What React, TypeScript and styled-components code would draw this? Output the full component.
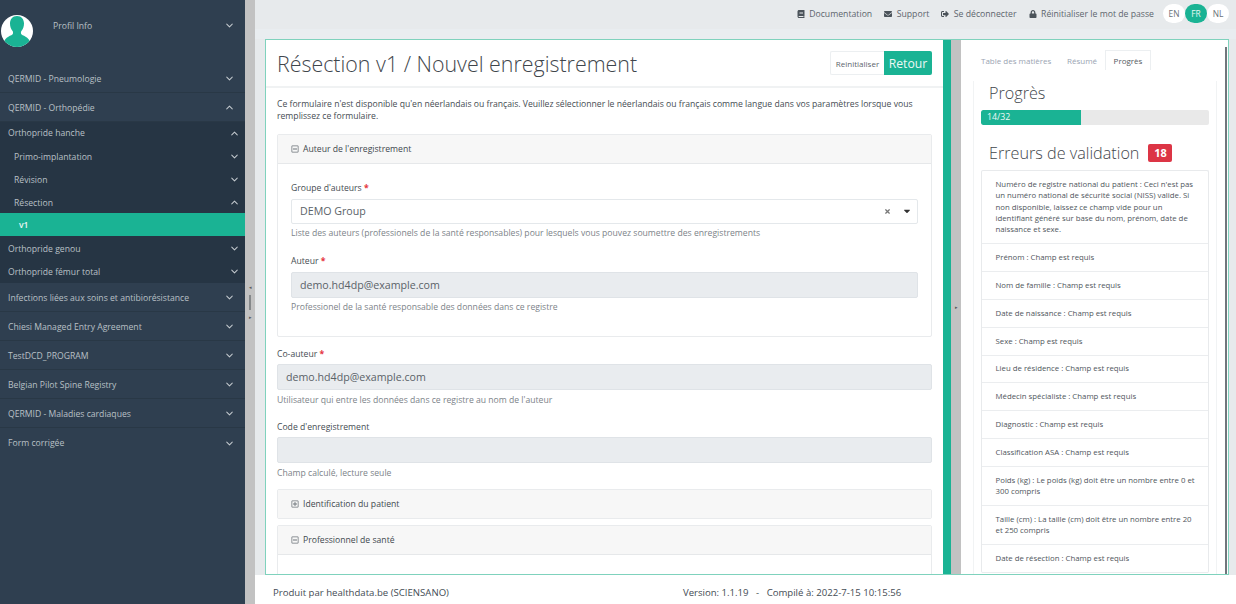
import React from "react";
import styled, { createGlobalStyle } from "styled-components";
import { FaBook, FaEnvelope, FaSignOutAlt, FaLock, FaRegMinusSquare, FaRegPlusSquare, FaTimes, FaCaretDown } from "react-icons/fa";
import { ChevronDown, ChevronUp } from "lucide-react";

const Global = createGlobalStyle`
  html, body { margin: 0; padding: 0; height: 100%; overflow: hidden; }
  body { font-family: "Open Sans", "Liberation Sans", sans-serif; color: #444c54; background: #fff; }
  * { box-sizing: border-box; }
`;

const Page = styled.div`display: flex; width: 1236px; height: 604px; overflow: hidden;`;
const Sidebar = styled.nav`width: 245px; flex: none; background: #2f3f50; color: #b9c0c6; font-size: 8.65px; display: flex; flex-direction: column;`;
const Profile = styled.div`height: 64px; display: flex; align-items: flex-start; padding: 15px 10px 0 1px;`;
const Avatar = styled.svg`width: 32px; height: 32px; flex: none;`;
const ProfileName = styled.span`margin-left: 20px; flex: 1; line-height: 22px;`;
const Row = styled.div<{ $last?: boolean }>`
  height: 29px; display: flex; align-items: center; justify-content: space-between; padding: 1px 10px 0 8px;
  border-bottom: ${p => p.$last ? "0" : "1px solid #293846"};
`;
const Sub = styled.div`background: #263544; height: 161px; display: flex; flex-direction: column;`;
const SubRow = styled.div<{ $level?: number; $active?: boolean; $first?: boolean }>`
  height: ${p => p.$first ? 22 : 23}px; flex: none; display: flex; align-items: center; justify-content: space-between;
  padding: ${p => p.$first || p.$active ? "0 5px 0" : "2px 5px 0"};
  padding-left: ${p => p.$level === 2 ? 19 : p.$level === 1 ? 14 : 8}px;
  ${p => p.$active ? "background: #1ab394; color: #eef6f4; font-weight: 600;" : ""}
`;
const Chev = styled.span<{ $mt?: number }>`display: inline-flex; color: #c4cacf; margin-top: ${p => p.$mt ?? 0}px; svg { display: block; }`;
const Splitter = styled.div`width: 10px; flex: none; background: #c2c2c2; display: flex; flex-direction: column; align-items: center; justify-content: center; gap: 5px;`;
const Tri = styled.span`font-size: 5px; line-height: 5px; color: #5a5a5a;`;
const Handle = styled.span`width: 2px; height: 15px; background: #85888a;`;
const Content = styled.main`flex: 1; min-width: 0; display: flex; flex-direction: column; background: #e7eaec;`;
const Top = styled.header`height: 29px; flex: none; display: flex; align-items: center; justify-content: flex-end; padding: 0 7px 2px 0; font-size: 8.7px; color: #5d656c;`;
const TopLink = styled.span`display: inline-flex; align-items: center; gap: 4.5px; margin-right: 12px; svg { width: 8px; height: 8px; color: #4b535a; }`;
const Langs = styled.div`display: flex; margin-left: -3px;`;
const Lang = styled.span<{ $on?: boolean }>`
  width: 22px; height: 19px; border-radius: 10px; display: flex; align-items: center; justify-content: center; font-size: 8.4px;
  background: ${p => p.$on ? "#1ab394" : "#fff"}; color: ${p => p.$on ? "#e8f7f3" : "#6b7278"};
`;
const Band = styled.div`height: 10px; flex: none; background: #e9edf0;`;
const PanelWrap = styled.div`flex: 1; display: flex; padding: 0 7px 0 10px; min-height: 0;`;
const Panel = styled.section`flex: 1; display: flex; min-width: 0; background: #fff; border: 1px solid #7fd2bd; overflow: hidden;`;
const FormCol = styled.div`width: 677px; flex: none; display: flex; flex-direction: column; overflow: hidden;`;
const Head = styled.div`height: 48px; flex: none; display: flex; align-items: center; justify-content: space-between; padding: 0 11px; border-bottom: 2px solid #f0f2f3;`;
const Title = styled.h1`margin: 2px 0 0; font-weight: 300; font-size: 21.4px; color: #3f464c; white-space: nowrap; line-height: 30px;`;
const Btns = styled.div`display: flex;`;
const ResetBtn = styled.button`height: 24px; width: 54px; border: 1px solid #eceff1; border-right: 0; background: #fff; border-radius: 2px 0 0 2px; font: 8px "Open Sans", sans-serif; color: #5d656c; padding: 0;`;
const BackBtn = styled.button`height: 24px; width: 48px; border: 0; background: #1ab394; border-radius: 0 2px 2px 0; font: 12.2px "Open Sans", sans-serif; color: #eef8f5; padding: 0;`;
const Body = styled.div`padding: 10px 11px 0; font-size: 8.65px; line-height: 12.4px; color: #454c52; flex: 1;`;
const Intro = styled.p`margin: 0 0 11px;`;
const Card = styled.div<{ $h?: number; $mb?: number }>`border: 1px solid #e9ebed; border-radius: 2px; margin-bottom: ${p => p.$mb ?? 6}px; ${p => p.$h ? `height: ${p.$h}px;` : ""}`;
const CardHead = styled.div<{ $line?: boolean }>`
  height: ${p => p.$line ? 29 : 28}px; background: #f7f7f7; display: flex; align-items: center; gap: 4px; padding: 0 13px; font-size: 8.65px; color: #41484e;
  ${p => p.$line ? "border-bottom: 1px solid #e6e8ea;" : ""}
  svg { width: 8px; height: 8px; color: #6c7379; }
`;
const CardBody = styled.div`padding: 18.5px 13px 0;`;
const Field = styled.div<{ $mb?: number }>`margin-bottom: ${p => p.$mb ?? 0}px;`;
const Label = styled.div`font-size: 8.65px; line-height: 12px; height: 12px; margin-bottom: 4.5px; color: #454c52;`;
const Star = styled.span`color: #e5343d; font-weight: 700;`;
const Input = styled.div<{ $ro?: boolean; $h?: number }>`
  height: ${p => p.$h ?? 26}px; border: 1px solid ${p => p.$ro ? "#dfe3e7" : "#e4e8eb"}; border-radius: 2px; background: ${p => p.$ro ? "#e9ecef" : "#fff"};
  display: flex; align-items: center; padding: 0 5px 0 8px; font-size: 10.65px; color: #5a6268; gap: 11px;
`;
const InputText = styled.span`flex: 1;`;
const Clear = styled.span`display: inline-flex; color: #777; svg { width: 7px; height: 7px; display: block; }`;
const Caret = styled.span`display: inline-flex; color: #333; svg { width: 10px; height: 10px; display: block; }`;
const Help = styled.div`font-size: 8.65px; line-height: 12px; margin-top: 3.5px; color: #7c8389;`;
const Green = styled.div`width: 8px; flex: none; background: #1ab394;`;
const Mid = styled.div`width: 10px; flex: none; background: #c2c2c2; display: flex; align-items: center; justify-content: center;`;
const Right = styled.aside`flex: 1; min-width: 0; position: relative; padding: 10px 0 0 12px; overflow: hidden;`;
const ScrollThumb = styled.span`position: absolute; right: 1px; top: 7px; width: 2px; bottom: 0; background: #70767c;`;
const Tabs = styled.div`display: flex; height: 20px; font-size: 8px; padding-left: 8px; align-items: center; color: #9aa4b2;`;
const Tab = styled.span<{ $on?: boolean; $w: number }>`
  width: ${p => p.$w}px; flex: none; height: 20px; display: flex; align-items: center; justify-content: ${p => p.$on ? "center" : "flex-start"};
  ${p => p.$on ? "border: 1px solid #eceff1; border-bottom: 0; color: #545b61; background: #fff;" : ""}
`;
const TabBody = styled.div`width: 244px; border: 1px solid #f1f3f4; border-width: 0 1px; padding: 0 7px; height: 500px;`;
const H2 = styled.h2<{ $mt: number }>`margin: ${p => p.$mt}px 0 0 8px; font-weight: 300; font-size: 16.2px; line-height: 24px; color: #3f464c; display: flex; align-items: center; white-space: nowrap;`;
const Progress = styled.div`height: 15px; background: #e9e9e9; border-radius: 2px; overflow: hidden; margin-top: 5px;`;
const Bar = styled.div`height: 100%; background: #1ab394; color: #eef8f5; font-size: 8.8px; line-height: 15px; padding-left: 6px; border-radius: 2px 0 0 2px;`;
const Badge = styled.span`margin-left: 9px; width: 24px; height: 18px; background: #dc3545; border-radius: 2px; color: #fff; font-size: 11px; font-weight: 700; display: flex; align-items: center; justify-content: center;`;
const List = styled.ul`list-style: none; margin: 5px 0 0; padding: 0; border: 1px solid #e8eaec; border-bottom: 0; border-radius: 2px;`;
const Item = styled.li`padding: 7.8px 13px 7.6px 13.5px; font-size: 7.8px; line-height: 11.4px; color: #4f565c; border-bottom: 1px solid #ebedef;`;
const Footer = styled.footer`height: 29px; flex: none; background: #fff; display: flex; align-items: center; padding: 5px 0 0 18px; font-size: 9.6px; color: #444c54;`;
const FooterInfo = styled.span`margin-left: 234px; white-space: pre;`;

const Down = () => <Chev><ChevronDown size={11} strokeWidth={2.2} /></Chev>;
const Up = () => <Chev><ChevronUp size={11} strokeWidth={2.2} /></Chev>;

const errors = [
  "Numéro de registre national du patient : Ceci n'est pas un numéro national de sécurité social (NISS) valide. Si non disponible, laissez ce champ vide pour un identifiant généré sur base du nom, prénom, date de naissance et sexe.",
  "Prénom : Champ est requis",
  "Nom de famille : Champ est requis",
  "Date de naissance : Champ est requis",
  "Sexe : Champ est requis",
  "Lieu de résidence : Champ est requis",
  "Médecin spécialiste : Champ est requis",
  "Diagnostic : Champ est requis",
  "Classification ASA : Champ est requis",
  "Poids (kg) : Le poids (kg) doit être un nombre entre 0 et 300 compris",
  "Taille (cm) : La taille (cm) doit être un nombre entre 20 et 250 compris",
  "Date de résection : Champ est requis",
];

export default function App() {
  return (
    <Page>
      <Global />
      <Sidebar>
        <Profile>
          <Avatar viewBox="0 0 32 32">
            <defs><clipPath id="av"><circle cx="16" cy="16" r="16" /></clipPath></defs>
            <circle cx="16" cy="16" r="16" fill="#fff" />
            <g clipPath="url(#av)" fill="#1ab394">
              <path d="M16 1c-4.6 0-7 3.4-7 7.6 0 3 1 5.6 2.6 7.4.6.8.7 2.600-.2 3.600C9 21.400 2 22.500 2 32h28c0-9.500-7-10.600-9.400-12.400-.9-1-.8-2.800-.2-3.600C22 14.200 23 11.600 23 8.600 23 4.400 20.600 1 16 1z" />
            </g>
          </Avatar>
          <ProfileName>Profil Info</ProfileName>
          <Chev $mt={5}><ChevronDown size={11} strokeWidth={2.2} /></Chev>
        </Profile>
        <Row><span>QERMID - Pneumologie</span><Down /></Row>
        <Row><span>QERMID - Orthopédie</span><Up /></Row>
        <Sub>
          <SubRow $first><span>Orthopride hanche</span><Up /></SubRow>
          <SubRow $level={1}><span>Primo-implantation</span><Down /></SubRow>
          <SubRow $level={1}><span>Révision</span><Down /></SubRow>
          <SubRow $level={1}><span>Résection</span><Up /></SubRow>
          <SubRow $level={2} $active><span>v1</span></SubRow>
          <SubRow><span>Orthopride genou</span><Down /></SubRow>
          <SubRow><span>Orthopride fémur total</span><Down /></SubRow>
        </Sub>
        <Row><span>Infections liées aux soins et antibiorésistance</span><Down /></Row>
        <Row><span>Chiesi Managed Entry Agreement</span><Down /></Row>
        <Row><span>TestDCD_PROGRAM</span><Down /></Row>
        <Row><span>Belgian Pilot Spine Registry</span><Down /></Row>
        <Row><span>QERMID - Maladies cardiaques</span><Down /></Row>
        <Row $last><span>Form corrigée</span><Down /></Row>
      </Sidebar>
      <Splitter><Tri>◂</Tri><Handle /><Tri>▸</Tri></Splitter>
      <Content>
        <Top>
          <TopLink><FaBook />Documentation</TopLink>
          <TopLink><FaEnvelope />Support</TopLink>
          <TopLink><FaSignOutAlt />Se déconnecter</TopLink>
          <TopLink><FaLock />Réinitialiser le mot de passe</TopLink>
          <Langs><Lang>EN</Lang><Lang $on>FR</Lang><Lang>NL</Lang></Langs>
        </Top>
        <Band />
        <PanelWrap>
          <Panel>
            <FormCol>
              <Head>
                <Title>Résection v1 / Nouvel enregistrement</Title>
                <Btns><ResetBtn>Reinitialiser</ResetBtn><BackBtn>Retour</BackBtn></Btns>
              </Head>
              <Body>
                <Intro>Ce formulaire n'est disponible qu'en néerlandais ou français. Veuillez sélectionner le néerlandais ou français comme langue dans vos paramètres lorsque vous remplissez ce formulaire.</Intro>
                <Card $h={203} $mb={11}>
                  <CardHead $line><FaRegMinusSquare />Auteur de l'enregistrement</CardHead>
                  <CardBody>
                    <Field $mb={16}>
                      <Label>Groupe d'auteurs <Star>*</Star></Label>
                      <Input $h={25}><InputText>DEMO Group</InputText><Clear><FaTimes /></Clear><Caret><FaCaretDown /></Caret></Input>
                      <Help>Liste des auteurs (professionels de la santé responsables) pour lesquels vous pouvez soumettre des enregistrements</Help>
                    </Field>
                    <Field>
                      <Label>Auteur <Star>*</Star></Label>
                      <Input $ro><InputText>demo.hd4dp@example.com</InputText></Input>
                      <Help>Professionel de la santé responsable des données dans ce registre</Help>
                    </Field>
                  </CardBody>
                </Card>
                <Field $mb={15}>
                  <Label>Co-auteur <Star>*</Star></Label>
                  <Input $ro><InputText>demo.hd4dp@example.com</InputText></Input>
                  <Help>Utilisateur qui entre les données dans ce registre au nom de l'auteur</Help>
                </Field>
                <Field $mb={10.5}>
                  <Label>Code d'enregistrement</Label>
                  <Input $ro />
                  <Help>Champ calculé, lecture seule</Help>
                </Field>
                <Card><CardHead><FaRegPlusSquare />Identification du patient</CardHead></Card>
                <Card $h={60}><CardHead $line><FaRegMinusSquare />Professionnel de santé</CardHead></Card>
              </Body>
            </FormCol>
            <Green />
            <Mid><Tri>▸</Tri></Mid>
            <Right>
              <ScrollThumb />
              <Tabs>
                <Tab $w={86}>Table des matières</Tab>
                <Tab $w={38}>Résumé</Tab>
                <Tab $on $w={46}>Progrès</Tab>
              </Tabs>
              <TabBody>
                <H2 $mt={11}>Progrès</H2>
                <Progress><Bar style={{ width: `${(100 * 100) / 228}%` }}>14/32</Bar></Progress>
                <H2 $mt={16}>Erreurs de validation<Badge>18</Badge></H2>
                <List>{errors.map(e => <Item key={e}>{e}</Item>)}</List>
              </TabBody>
            </Right>
          </Panel>
        </PanelWrap>
        <Footer>
          <span>Produit par healthdata.be (SCIENSANO)</span>
          <FooterInfo>{"Version: 1.1.19   -   Compilé à: 2022-7-15 10:15:56"}</FooterInfo>
        </Footer>
      </Content>
    </Page>
  );
}
